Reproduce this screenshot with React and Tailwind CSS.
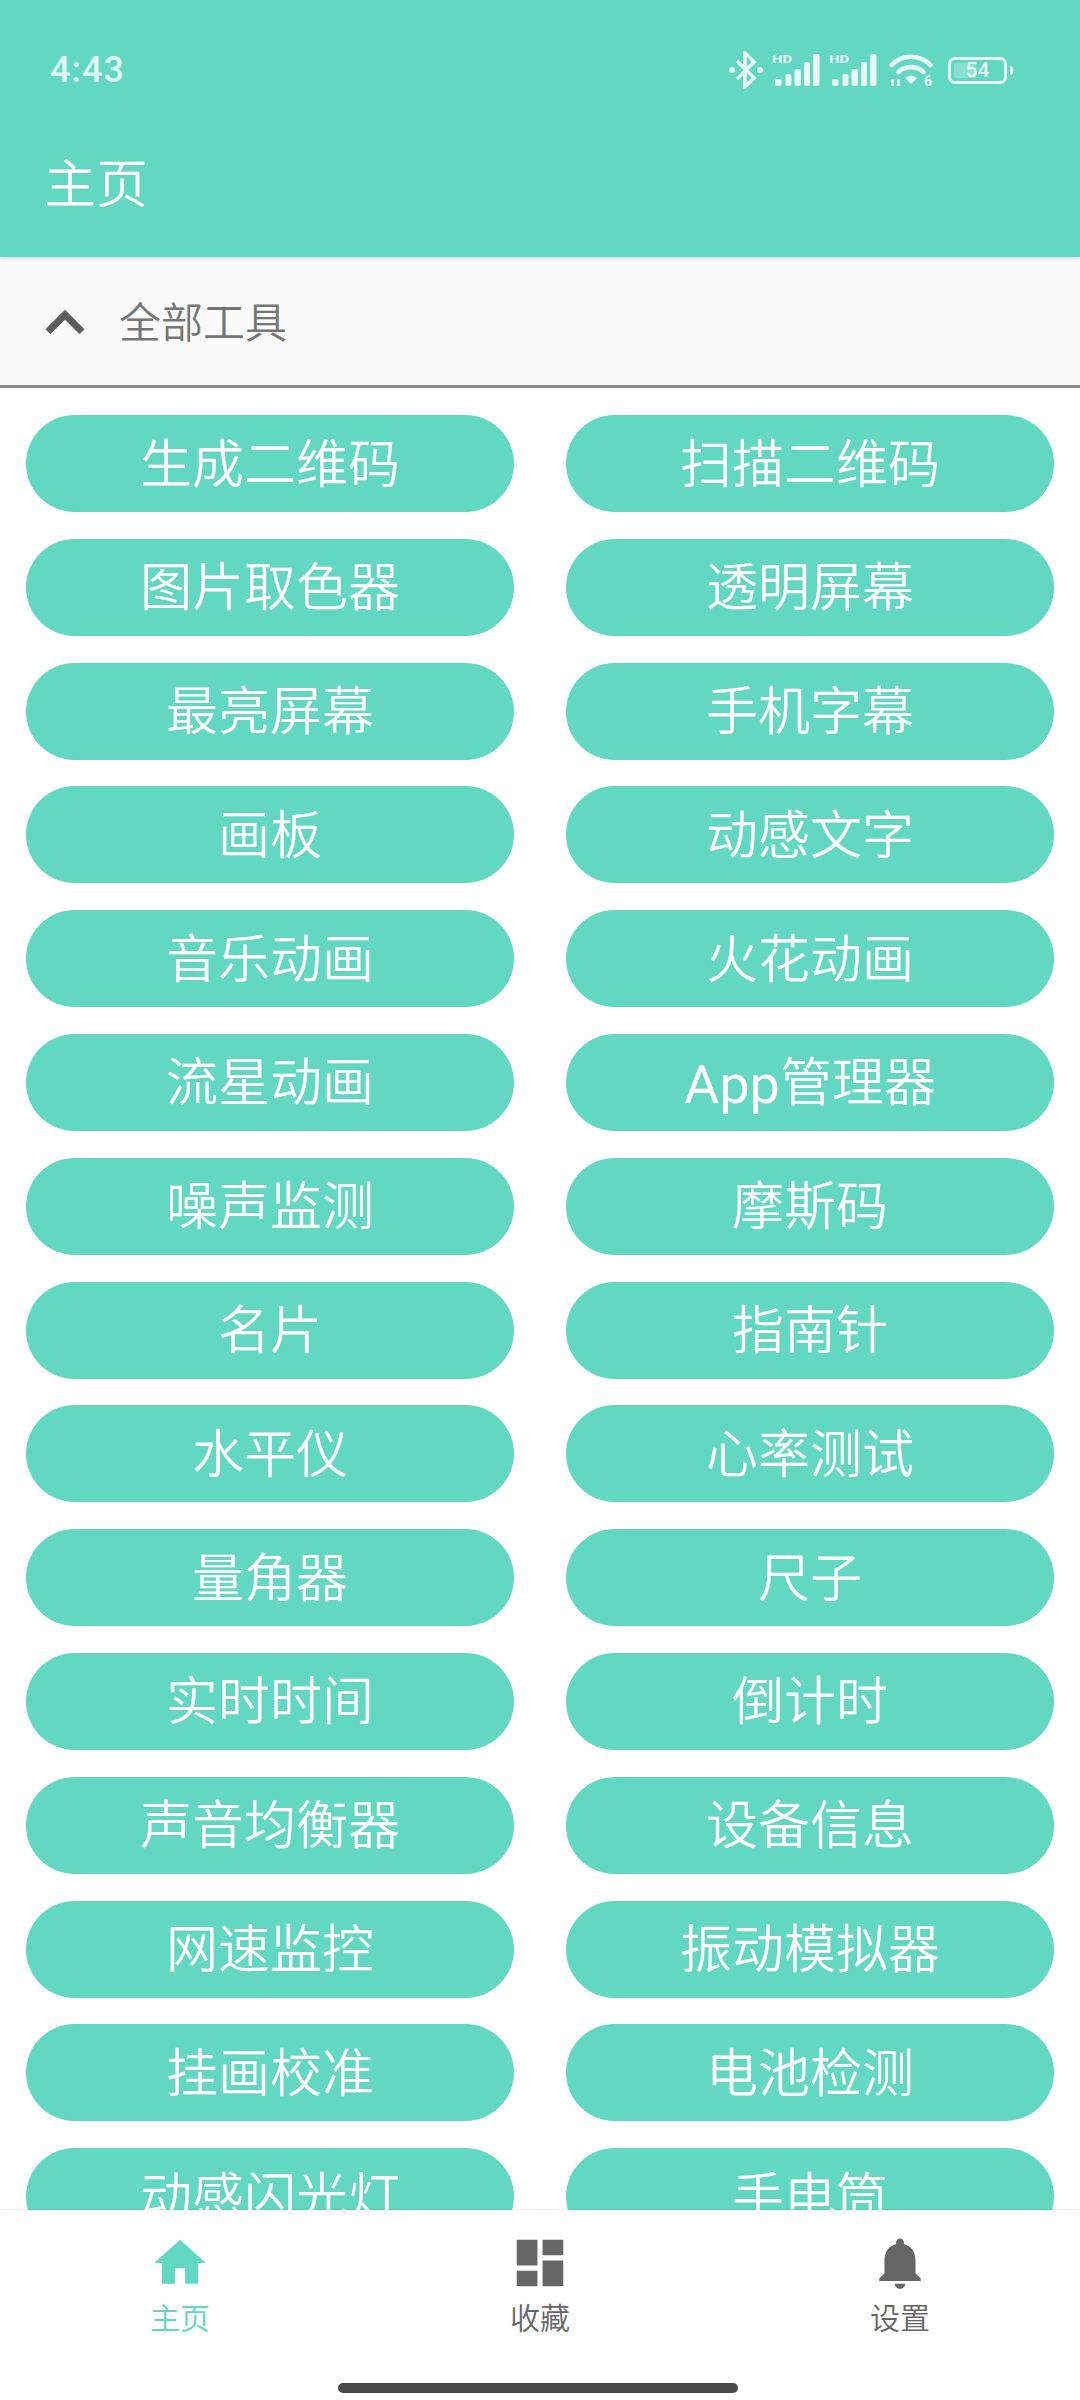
import React from 'react';

const tools = [
    '生成二维码', '扫描二维码',
    '图片取色器', '透明屏幕',
    '最亮屏幕', '手机字幕',
    '画板', '动感文字',
    '音乐动画', '火花动画',
    '流星动画', 'App管理器',
    '噪声监测', '摩斯码',
    '名片', '指南针',
    '水平仪', '心率测试',
    '量角器', '尺子',
    '实时时间', '倒计时',
    '声音均衡器', '设备信息',
    '网速监控', '振动模拟器',
    '挂画校准', '电池检测',
    '动感闪光灯', '手电筒',
];

const BluetoothIcon = () => (
    <svg width="36" height="38" viewBox="0 0 36 38" fill="none" stroke="#e9fbf7" strokeWidth="3.6">
        <path d="M9 10 L26 27 L17 36 V2 L26 11 L9 28" />
        <circle cx="4" cy="19" r="3" fill="#e9fbf7" stroke="none" />
        <circle cx="32" cy="19" r="3" fill="#e9fbf7" stroke="none" />
    </svg>
);

const SignalIcon = () => (
    <svg className="overflow-visible" width="48" height="32" viewBox="0 0 48 32" fill="#e9fbf7">
        <text x="0" y="9" fontSize="11.5" fontWeight="700" fontFamily="Roboto, sans-serif" textLength="20" lengthAdjust="spacingAndGlyphs">HD</text>
        <rect x="3" y="25" width="6.5" height="7" rx="2" />
        <rect x="13.5" y="20" width="6" height="12" rx="2" />
        <rect x="22.5" y="15" width="6.5" height="17" rx="2" />
        <rect x="32" y="8" width="6" height="24" rx="2" />
        <rect x="41" y="0" width="6.5" height="32" rx="2" />
    </svg>
);

const WifiIcon = () => (
    <svg className="overflow-visible" width="44" height="34" viewBox="0 0 44 34" fill="none" stroke="#e9fbf7" strokeWidth="4.6" strokeLinecap="round">
        <path d="M2.5 12 C13 1 31 1 41.5 12" />
        <path d="M9.5 19 C16 12.5 28 12.5 34.5 19" />
        <path d="M16 25 L22 31 L28 25 C24 21.5 20 21.5 16 25Z" fill="#e9fbf7" stroke="none" />
        <path d="M3.5 26 V33 M9.5 26 V33" strokeWidth="2.8" strokeLinecap="butt" />
        <text x="35" y="33" fontSize="14" fontWeight="700" fontFamily="Roboto, sans-serif" fill="#e9fbf7" stroke="none">6</text>
    </svg>
);

const Battery = () => (
    <div className="flex items-center gap-[3px]">
        <div className="relative w-[59px] h-[27px] rounded-[7px] border-[3px] border-[#e9fbf7] flex items-center justify-center overflow-hidden">
            <div className="absolute left-[3px] top-[3px] bottom-[3px] w-[22px] rounded-[2px] bg-white/25" />
            <span className="relative text-[21px] leading-none font-medium text-[#e9fbf7]">54</span>
        </div>
        <div className="w-[3px] h-[9px] rounded-r-sm bg-[#e9fbf7]" />
    </div>
);

const NavItem = ({ label, active, children }) => (
    <div className="flex-1 flex flex-col items-center">
        <svg width="62" height="62" viewBox="0 0 24 24" fill={active ? '#62d7c2' : '#666666'}>
            {children}
        </svg>
        <span className={`mt-[7px] text-[30px] leading-[36px] font-[350] ${active ? 'text-[#62d7c2]' : 'text-[#666666]'}`}>{label}</span>
    </div>
);

const App = () => {
    return (
        <div className="w-[1080px] h-[2400px] flex flex-col overflow-hidden bg-white font-['Roboto','Noto_Sans_CJK_SC',sans-serif]">

            {/* Header */}
            <header className="relative z-10 h-[257px] shrink-0 bg-[#62d7c2] shadow-[0_2px_4px_rgba(0,0,0,0.12)]">
                <div className="h-[84px] mt-[28px] pl-[50px] pr-[67px] flex items-center justify-between">
                    <span className="text-[36px] tracking-[1px] font-medium text-[#dff8f2]">4:43</span>
                    <div className="flex items-center">
                        <BluetoothIcon />
                        <div className="ml-[8px]"><SignalIcon /></div>
                        <div className="ml-[9px]"><SignalIcon /></div>
                        <div className="ml-[12px]"><WifiIcon /></div>
                        <div className="ml-[15px]"><Battery /></div>
                    </div>
                </div>
                <h1 className="pl-[44px] h-[144px] pt-[4px] flex items-center text-[52px] font-[350] text-white">主页</h1>
            </header>

            {/* Collapsible section */}
            <div className="h-[131px] shrink-0 flex items-center bg-[#fbfbfb] border-b-[3px] border-[#8a8a8a]">
                <svg className="ml-[27px] mt-[3px]" width="76" height="76" viewBox="0 0 24 24" fill="#5f5b5b" stroke="#5f5b5b" strokeWidth="0.3">
                    <path d="M12 8l-6 6 1.41 1.41L12 10.83l4.59 4.58L18 14z" />
                </svg>
                <span className="ml-[16px] pt-[5px] text-[42px] font-[350] text-[#757575]">全部工具</span>
            </div>

            {/* Tool buttons */}
            <main className="flex-1 overflow-hidden">
                <div className="grid grid-cols-2 gap-x-[52px] gap-y-[26.8px] px-[26px] pt-[27px]">
                    {tools.map((name) => (
                        <button key={name} className="h-[97px] rounded-full bg-[#62d7c2] flex items-center justify-center pt-[4px] text-[52px] font-[350] text-white">
                            {name === 'App管理器' ? <><span className="text-[54px] font-normal">App</span>管理器</> : name}
                        </button>
                    ))}
                </div>
            </main>

            {/* Bottom navigation */}
            <nav className="relative h-[190px] shrink-0 bg-white pt-[22px] shadow-[0_-1px_2px_rgba(0,0,0,0.08)]">
                <div className="flex">
                    <NavItem label="主页" active>
                        <path d="M10 20v-6h4v6h5v-8h3L12 3 2 12h3v8z" />
                    </NavItem>
                    <NavItem label="收藏">
                        <path d="M3 13h8V3H3v10zm0 8h8v-6H3v6zm10 0h8V11h-8v10zm0-18v6h8V3h-8z" />
                    </NavItem>
                    <NavItem label="设置">
                        <path d="M12 22c1.1 0 2-.9 2-2h-4c0 1.1.9 2 2 2zm6-6v-5c0-3.07-1.63-5.64-4.5-6.32V4c0-.83-.67-1.5-1.5-1.5s-1.5.67-1.5 1.5v.68C7.64 5.36 6 7.92 6 11v5l-2 2v1h16v-1l-2-2z" />
                    </NavItem>
                </div>
                <div className="absolute left-[338px] bottom-[7px] w-[400px] h-[10px] rounded-full bg-[#4a4a4a]" />
            </nav>
        </div>
    );
};

export default App;
